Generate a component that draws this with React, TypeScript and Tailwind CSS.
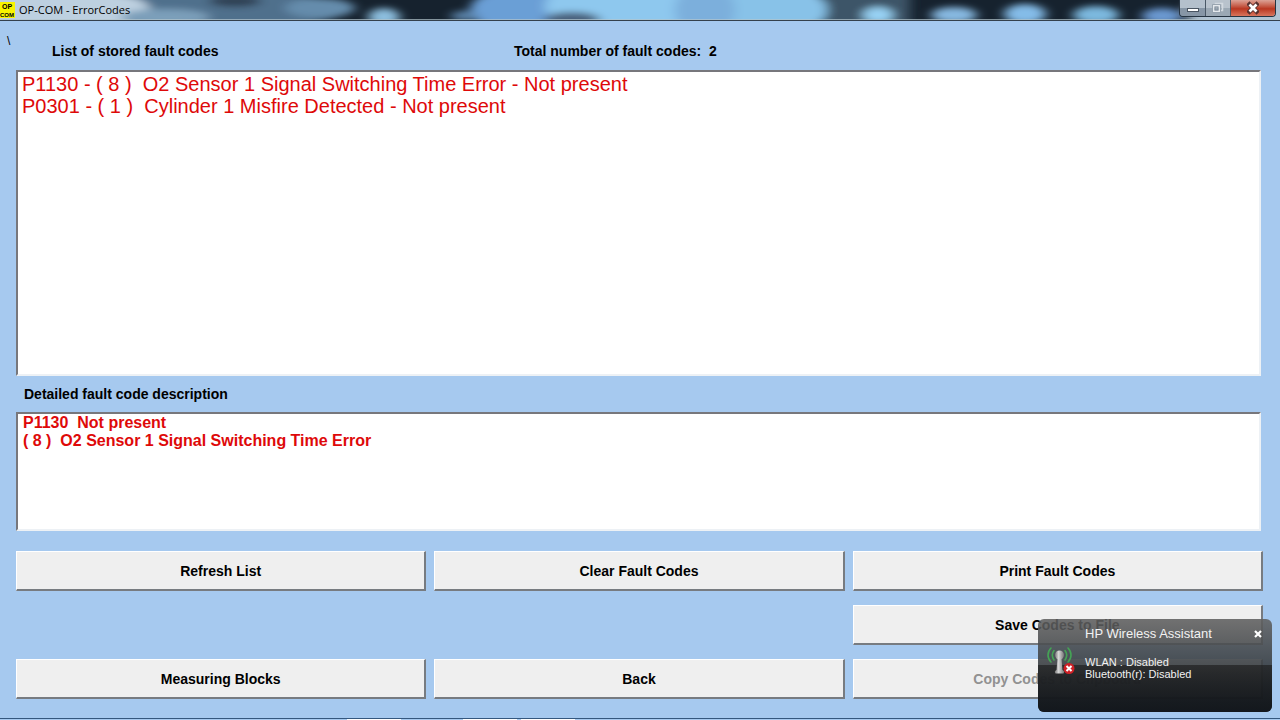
import type { ReactNode } from "react";

const faults = [
  "P1130 - ( 8 )  O2 Sensor 1 Signal Switching Time Error - Not present",
  "P0301 - ( 1 )  Cylinder 1 Misfire Detected - Not present",
];

const details = ["P1130  Not present", "( 8 )  O2 Sensor 1 Signal Switching Time Error"];

const glows = [
  { x: 215, y: 10, rx: 130, ry: 20, fill: "#50708c" },
  { x: 40, y: 10, rx: 110, ry: 24, fill: "#bdd0e0" },
  { x: 165, y: 17, rx: 45, ry: 8, fill: "#7c9fba" },
  { x: 235, y: 1, rx: 26, ry: 6, fill: "#2e4152" },
  { x: 320, y: 8, rx: 35, ry: 10, fill: "#658cac" },
  { x: 384, y: 17, rx: 16, ry: 9, fill: "#8cbede" },
  { x: 530, y: 10, rx: 60, ry: 24, fill: "#6b9fd6" },
  { x: 465, y: 16, rx: 14, ry: 5, fill: "#5b84aa" },
  { x: 630, y: 6, rx: 85, ry: 30, fill: "#8ec8ee" },
  { x: 765, y: 10, rx: 62, ry: 30, fill: "#88c2e8" },
  { x: 705, y: 10, rx: 30, ry: 26, fill: "#7cafdc" },
  { x: 572, y: 20, rx: 28, ry: 8, fill: "#48607c" },
  { x: 878, y: 15, rx: 15, ry: 8, fill: "#98d2f4" },
  { x: 954, y: 15, rx: 23, ry: 8, fill: "#86b8e0" },
  { x: 1025, y: 14, rx: 21, ry: 10, fill: "#84bce8" },
  { x: 1096, y: 15, rx: 23, ry: 9, fill: "#7cb8de" },
  { x: 1162, y: 16, rx: 20, ry: 8, fill: "#6a98d0" },
  { x: 1245, y: 12, rx: 60, ry: 22, fill: "#b0c2d2" },
];

function GlassBackdrop() {
  return (
    <svg className="absolute inset-0 h-full w-full" viewBox="0 0 1280 20" preserveAspectRatio="none" aria-hidden="true">
      <defs>
        <filter id="soft" filterUnits="userSpaceOnUse" x="-40" y="-40" width="1360" height="100">
          <feGaussianBlur stdDeviation="6 3" />
        </filter>
      </defs>
      <rect width="1280" height="20" fill="#16222e" />
      <g filter="url(#soft)">
        <rect x="825" y="-10" width="85" height="40" fill="#3c5468" />
        {glows.map((g) => (
          <ellipse key={g.x} cx={g.x} cy={g.y} rx={g.rx} ry={g.ry} fill={g.fill} />
        ))}
      </g>
      <rect y="19" width="1280" height="1" fill="#b4c4cc" opacity=".7" />
    </svg>
  );
}

function TitleBar() {
  return (
    <header className="relative flex h-5 justify-between overflow-hidden">
      <GlassBackdrop />
      <div className="relative flex items-center gap-1">
        <svg className="h-4 w-[15px]" viewBox="0 0 15 16" aria-hidden="true">
          <rect width="15" height="16" fill="#f8f400" />
          <text x="7" y="7" textAnchor="middle" fontSize="7" fontWeight="700" fontFamily="Liberation Sans, sans-serif">OP</text>
          <text x="7" y="15" textAnchor="middle" fontSize="6" fontWeight="700" fontFamily="Liberation Sans, sans-serif">COM</text>
        </svg>
        <h1 className="font-['Open_Sans',sans-serif] text-[11px] leading-5 text-black">OP-COM - ErrorCodes</h1>
      </div>
      <div className="relative mr-1 flex h-[17px] overflow-hidden rounded-b-sm border border-t-0 border-[#263442]">
        <button aria-label="Minimize" className="flex w-[26px] items-center justify-center border-r border-[#4a5866] bg-linear-to-b from-[#b4c0cc] from-50% to-[#8796a6] to-50%">
          <svg className="h-4 w-3" viewBox="0 0 12 16" aria-hidden="true">
            <rect x="0.5" y="8.5" width="11" height="3" fill="#fff" stroke="#4a5562" />
          </svg>
        </button>
        <button aria-label="Restore" disabled className="flex w-[25px] items-center justify-center border-r border-[#4a5866] bg-linear-to-b from-[#b8c2cc] from-50% to-[#9ba8b4] to-50%">
          <svg className="h-4 w-3" viewBox="0 0 12 16" fill="none" aria-hidden="true">
            <path d="M3.5 4V3.5h7v7H9" stroke="#d2d9e0" strokeWidth="1.5" />
            <rect x="1.5" y="5.5" width="6" height="6" stroke="#e4e8ec" strokeWidth="2" />
            <rect x="3" y="7" width="3" height="3" stroke="#83909c" />
            <path d="M.5 4.500h8v8h-8z" stroke="#8b98a5" strokeWidth=".8" />
          </svg>
        </button>
        <button aria-label="Close" className="flex w-[44px] items-center justify-center bg-linear-to-b from-[#dba296] via-[#b93620] via-55% to-[#d8745c]">
          <svg className="h-4 w-3" viewBox="0 0 12 16" fill="none" aria-hidden="true">
            <path d="M2.500 4.500l7 7M9.500 4.500l-7 7" stroke="#57312f" strokeWidth="4.5" strokeLinecap="square" />
            <path d="M2.500 4.500l7 7M9.500 4.500l-7 7" stroke="#fff" strokeWidth="2.8" />
          </svg>
        </button>
      </div>
    </header>
  );
}

function ActionButton({ children, disabled = false }: { children: ReactNode; disabled?: boolean }) {
  return (
    <button
      disabled={disabled}
      className="h-10 border-t border-r-2 border-b-2 border-l border-t-white border-r-[#777b80] border-b-[#777b80] border-l-white bg-[#efefef] text-sm font-bold text-black disabled:text-[#919191]"
    >
      {children}
    </button>
  );
}

function SignalIcon() {
  return (
    <svg className="h-8 w-7 shrink-0" viewBox="0 0 28 32" fill="none" aria-hidden="true">
      <defs>
        <linearGradient id="metal">
          <stop stopColor="#777" />
          <stop offset=".4" stopColor="#d8d8d8" />
          <stop offset="1" stopColor="#777" />
        </linearGradient>
      </defs>
      <path
        d="M4 2C0 6 0 12 4 16M7 4.500C5 7 5 11 7 14M21 2C25 6 25 12 21 16M18 4.500C20 7 20 11 18 14"
        stroke="#45a355"
        strokeWidth="1.6"
        strokeLinecap="round"
      />
      <path d="M10.500 12h4l1 12c2 1 2 2 1 3.500h-8c-1-1.500-1-2.500 1-3.500z" fill="url(#metal)" />
      <circle cx="12.500" cy="9" r="4.500" fill="url(#metal)" />
      <circle cx="22" cy="22.500" r="5.500" fill="#cf2026" />
      <path d="M19.500 20l5 5M24.500 20l-5 5" stroke="#fff" strokeWidth="2" />
    </svg>
  );
}

function WirelessToast() {
  return (
    <aside
      aria-label="HP Wireless Assistant"
      className="absolute right-2 bottom-2 flex h-[93px] w-[234px] rounded-md bg-linear-to-b from-[#606060]/88 via-[#3a3f43]/90 via-50% to-[#0c1014]/92 text-[#f2f2f2]"
    >
      <div className="absolute inset-x-0 bottom-0 h-[47px] rounded-b-md bg-linear-to-b from-[#1c1c1c]/65 to-[#12161b]/80" />
      <div className="relative flex w-full pt-[7px] pr-2 pl-[9px]">
        <div className="w-[38px] shrink-0 pt-5">
          <SignalIcon />
        </div>
        <div className="grow">
          <h2 className="text-[13px] leading-4">HP Wireless Assistant</h2>
          <p className="pt-[14px] text-[11px] leading-3">WLAN : Disabled</p>
          <p className="text-[11px] leading-3">Bluetooth(r): Disabled</p>
        </div>
        <button aria-label="Close notification" className="flex h-4 w-3 items-center justify-center">
          <svg className="size-2" viewBox="0 0 8 8" aria-hidden="true">
            <path d="M1 1l6 6M7 1L1 7" stroke="#fff" strokeWidth="2.2" />
          </svg>
        </button>
      </div>
    </aside>
  );
}

export default function App() {
  return (
    <div className="relative flex min-h-screen flex-col overflow-hidden bg-[#a6c9ef] font-['Liberation_Sans',Arial,sans-serif]">
      <TitleBar />
      <main className="flex grow flex-col border-t border-[#34404c] pr-[17px] pl-4">
        <div className="-ml-4 flex h-[49px] text-sm font-bold text-black">
          <span className="w-[52px] pt-3 pl-[7px] text-xs leading-4 font-normal">\</span>
          <h2 className="w-[462px] pt-5 leading-5">List of stored fault codes</h2>
          <p className="pt-5 leading-5 whitespace-pre">Total number of fault codes:  2</p>
        </div>
        <ul className="mr-[2px] min-h-[306px] grow border-2 border-t-[#77777c] border-r-[#edf1f5] border-b-[#edf1f5] border-l-[#77777c] bg-white px-1 pt-px text-xl leading-[22px] text-[#de0909]">
          {faults.map((fault) => (
            <li key={fault} className="whitespace-pre">{fault}</li>
          ))}
        </ul>
        <h2 className="h-9 pt-2 pl-2 text-sm leading-5 font-bold text-black">Detailed fault code description</h2>
        <section className="mr-[2px] h-[119px] border-2 border-t-[#77777c] border-r-[#edf1f5] border-b-[#edf1f5] border-l-[#77777c] bg-white px-[5px] text-base leading-[18px] font-bold text-[#de0909]">
          {details.map((line) => (
            <p key={line} className="whitespace-pre">{line}</p>
          ))}
        </section>
        <div className="grid grid-cols-3 gap-x-2 gap-y-[14px] pt-5 pb-[19px]">
          <ActionButton>Refresh List</ActionButton>
          <ActionButton>Clear Fault Codes</ActionButton>
          <ActionButton>Print Fault Codes</ActionButton>
          <div className="col-span-2" />
          <ActionButton>Save Codes to File</ActionButton>
          <ActionButton>Measuring Blocks</ActionButton>
          <ActionButton>Back</ActionButton>
          <ActionButton disabled>Copy Codes to Clipboard</ActionButton>
        </div>
      </main>
      <footer className="flex h-[2px] border-t border-[#34577e] bg-[#a6c9ef] pl-[347px]">
        <div className="w-[54px] bg-white" />
        <div className="ml-[62px] w-[54px] bg-white" />
        <div className="ml-1 w-[54px] bg-white" />
      </footer>
      <WirelessToast />
    </div>
  );
}
